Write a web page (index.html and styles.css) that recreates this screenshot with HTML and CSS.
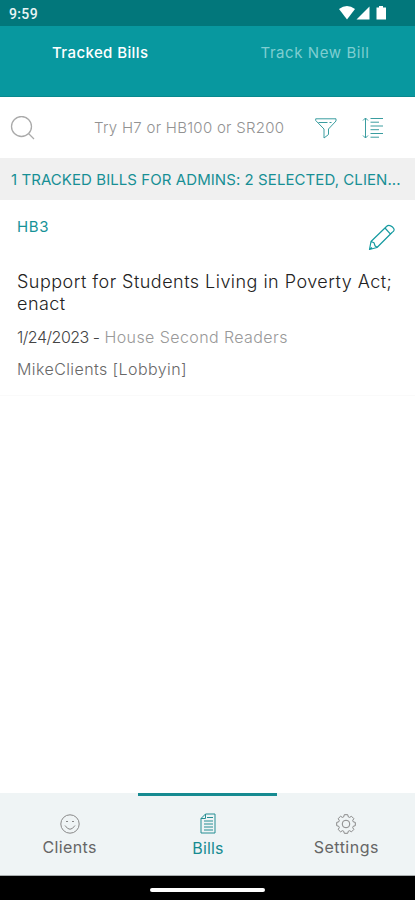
FILE: index.html
```html
<!DOCTYPE html>
<html lang="en">
<head>
<meta charset="utf-8">
<meta name="viewport" content="width=device-width">
<title>Tracked Bills</title>
<link rel="stylesheet" href="styles.css">
</head>
<body>
<div class="status">
  <span class="time">9:59</span>
  <svg class="indicators" width="50" height="16" viewBox="0 0 50 16" fill="#fff"><path d="M1 3Q9-3 17 3L9 13.500Z"/><path d="M31.500 .5V13.500H18.500Z"/><path d="M38.500 1.500h2.500V0h4v1.500H48V13.500h-9.500Z"/></svg>
</div>
<nav class="tabs">
  <a class="tab current"><span class="tab-one">Tracked Bills</span></a>
  <a class="tab"><span class="tab-two">Track New Bill</span></a>
</nav>
<div class="search">
  <svg class="find" width="26" height="26" viewBox="0 0 26 26" fill="none" stroke="#aaa" stroke-width="1.300"><circle cx="11.500" cy="10.500" r="10"/><path d="M18.500 17.500l5.500 5.500"/></svg>
  <span class="hint">Try H7 or HB100 or SR200</span>
  <svg class="filter" width="22" height="21" viewBox="0 0 22 21" fill="none" stroke="#3a9da0" stroke-width="1"><path d="M.7.8H21V3l-7.500 8v5.500L9 20V11L.7 2.500ZM3.500 4.500h9M14.500 4.500h2"/></svg>
  <svg class="sort" width="22" height="22" viewBox="0 0 22 22" fill="none" stroke="#3a9da0" stroke-width="1"><path d="M3.500 1v20M1 3.500L3.500 1 6 3.500M1 18.500L3.500 21 6 18.500M8.500 1.500H21M8.500 5.200h8.500M8.500 9H21M8.500 12.700h8.500M8.500 16.500H21M8.500 20.200h8.500"/></svg>
</div>
<div class="summary">1 TRACKED BILLS FOR ADMINS: 2 SELECTED, CLIEN...</div>
<main>
  <article class="bill">
    <div class="bill-head">
      <span class="code">HB3</span>
      <svg width="27" height="27" viewBox="0 0 27 27" fill="none" stroke="#159aa0" stroke-width="1.200" stroke-linejoin="round"><path d="M1.500 25.500L3 17.500 18.500 2.500Q21-.2 24.500 3T24 8.500L9 23.500ZM17 4l5.500 6.200M3 17.500l3 1.200 1 3 2 1.800M1.500 25.500l2.500-2"/></svg>
    </div>
    <h1>Support for Students Living in Poverty Act;<br>enact</h1>
    <p class="state"><span>1/24/2023 -</span> House Second Readers</p>
    <p class="client">MikeClients [Lobbyin]</p>
  </article>
</main>
<nav class="bottom">
  <a class="item">
    <svg width="20" height="20" viewBox="0 0 20 20" fill="none" stroke="#888" stroke-width="1"><circle cx="10" cy="10" r="9.200"/><path d="M5 11.500Q10 19 15 11.500M6 8q1-2 2 0M12 8q1-2 2 0"/></svg>
    <span class="l-clients">Clients</span>
  </a>
  <a class="item active">
    <svg width="20" height="22" viewBox="0 0 20 22" fill="none" stroke="#258e93" stroke-width="1"><path d="M7.500 1H17v19H3V5.500ZM7.500 1v4.500H3M9 4.500h6M6 8h9M6 11h9M6 14h9M6 17h9"/></svg>
    <span class="l-bills">Bills</span>
  </a>
  <a class="item">
    <svg width="20" height="20" viewBox="0 0 20 20" fill="none" stroke="#888" stroke-width="1" stroke-linejoin="round"><circle cx="10" cy="10" r="3.800"/><path d="M8.300.7h3.400l.6 2.200 1.200.5 2-1.100 2.300 2.300-1.100 2 .5 1.200 2.100.6v3.300l-2.100.6-.5 1.200 1.100 2-2.300 2.300-2-1.100-1.200.5-.6 2.100H8.300l-.6-2.100-1.200-.5-2 1.100-2.300-2.300 1.100-2-.5-1.200-2.100-.6V8.400l2.100-.6.5-1.200-1.100-2 2.300-2.300 2 1.100 1.200-.5Z"/></svg>
    <span class="l-settings">Settings</span>
  </a>
</nav>
<footer><div class="handle"></div></footer>
</body>
</html>
```
FILE: styles.css
```css
* { box-sizing: border-box; }
body { margin: 0; height: 900px; display: flex; flex-direction: column; overflow: hidden; background: #fff; font-family: Inter, "Open Sans", sans-serif; white-space: nowrap; }
svg { display: block; flex: none; }
.status { height: 26px; flex: none; background: #02777b; display: flex; justify-content: space-between; padding: 6px 27px 0 9px; }
.time { font: 500 14px/16px Roboto, sans-serif; color: #e8f4f4; letter-spacing: .35px; }
.tabs { height: 71px; flex: none; background: #08989f; display: flex; padding-top: 17px; border-bottom: 1px solid #08898e; }
.tab { flex: 1; padding-left: 52px; font-size: 15px; line-height: 20px; font-weight: 500; color: #7fced1; }
.tab + .tab { padding-left: 54px; font-weight: 400; }
.current { color: #fff; }
.tab-one { letter-spacing: .4px; }
.tab-two { letter-spacing: .57px; }
.search { height: 61px; flex: none; display: flex; align-items: flex-start; padding: 18px 0 0 10px; }
.find { margin-top: 1px; }
.hint { width: 191px; margin: 3px 30px 0 58px; font-size: 15px; line-height: 20px; font-weight: 300; color: #929292; letter-spacing: .27px; }
.filter { margin-top: 3px; }
.sort { margin: 2px 0 0 25px; }
.summary { height: 42px; flex: none; background: #f0f0f0; padding-left: 11px; font-size: 15px; line-height: 43px; color: #178f95; letter-spacing: .07px; }
main { flex: 1; }
.bill { height: 196px; padding: 17px 17px 0; border-bottom: 1px solid #fafafa; }
.bill-head { height: 54px; display: flex; justify-content: space-between; padding-right: 3px; }
.bill-head svg { margin-top: 7px; }
.code { font-size: 15px; line-height: 20px; color: #159297; letter-spacing: .7px; }
h1 { margin: 0; font-size: 18px; line-height: 22px; font-weight: 300; color: #222; letter-spacing: .47px; }
p { margin: 0; font-size: 16px; font-weight: 300; line-height: 20px; letter-spacing: .41px; }
.state { margin-top: 12px; color: #999; }
.state span { color: #444; letter-spacing: -.5px; }
.client { margin-top: 12px; color: #686868; }
.bottom { height: 83px; flex: none; display: flex; background: #eff4f5; border-bottom: 1px solid #a8adae; }
.item { flex: 1; display: flex; flex-direction: column; align-items: center; padding: 21px 0 0 1px; font-size: 16px; line-height: 20px; color: #666; }
.item span { margin-top: 3px; }
.l-clients { letter-spacing: .4px; }
.l-bills { letter-spacing: .2px; }
.l-settings { letter-spacing: .5px; }
.active { border-top: 3px solid #168b91; padding-top: 17px; color: #168b91; }
footer { height: 24px; flex: none; background: #000; display: flex; justify-content: center; padding-top: 12px; }
.handle { width: 115px; height: 4px; border-radius: 2px; background: #fff; }
```
